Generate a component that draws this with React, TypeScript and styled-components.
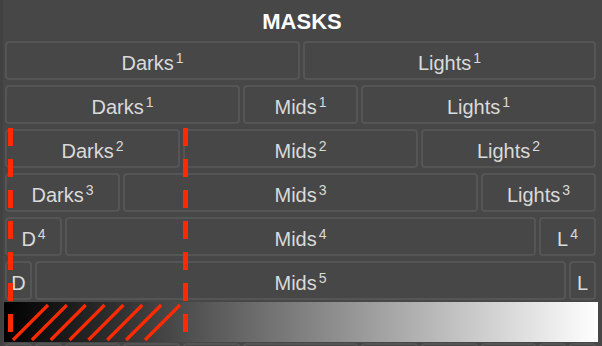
import styled, { createGlobalStyle } from "styled-components";

const GlobalStyle = createGlobalStyle`
  html, body {
    margin: 0;
    padding: 0;
    background: #474747;
  }
  body {
    font-family: "Liberation Sans", Arial, sans-serif;
  }
`;

const RED = "#ff2a00";

const Panel = styled.div`
  position: relative;
  box-sizing: border-box;
  width: 602px;
  height: 346px;
  overflow: hidden;
  background: #474747;
  border-left: 3px solid #414141;
  padding: 0 6px 0 2px;
`;

const Title = styled.div`
  box-sizing: border-box;
  height: 41px;
  padding-top: 11px;
  line-height: 22px;
  font-size: 22px;
  font-weight: 700;
  color: #ffffff;
  text-align: center;
  padding-left: 3px;
`;

const Row = styled.div<{ $side?: number; $top?: number }>`
  display: grid;
  grid-template-columns: ${(p) => (p.$side ? `${p.$side}px 1fr ${p.$side}px` : "295px 1fr")};
  column-gap: 3px;
  margin-top: ${(p) => (p.$top ?? 5)}px;
`;

const FlatRow = styled(Row)`
  grid-template-columns: 27px 27px 55px 57px 57px 1fr 57px 57px 55px 27px 27px;
`;

const Button = styled.div`
  box-sizing: border-box;
  height: 39px;
  border: 2px solid #555555;
  border-radius: 4px;
  padding-top: 5px;
  line-height: 30px;
  font-size: 20px;
  color: #dadada;
  text-align: center;
  white-space: nowrap;
  overflow: hidden;
`;

const Sup = styled.span`
  font-size: 14px;
  line-height: 0;
  vertical-align: 7px;
  margin-left: 2px;
`;

const Gradient = styled.div`
  position: relative;
  height: 40px;
  margin: 2px -2px 0 -1px;
  background: linear-gradient(to right, #000000 0%, #ffffff 100%);
`;

const Hatch = styled.svg`
  position: absolute;
  left: 0;
  top: 0;
`;

const Marker = styled.div<{ $left: number }>`
  position: absolute;
  left: ${(p) => p.$left}px;
  top: 128px;
  width: 5px;
  height: 204px;
  background: repeating-linear-gradient(
    to bottom,
    ${RED} 0px,
    ${RED} 18px,
    transparent 18px,
    transparent 31px
  );
`;

function Label({ text, n }: { text: string; n?: number }) {
  return (
    <Button>
      {text}
      {n !== undefined ? <Sup>{n}</Sup> : null}
    </Button>
  );
}

const rows: { side: number; d: string; l: string; n: number }[] = [
  { side: 235, d: "Darks", l: "Lights", n: 1 },
  { side: 175, d: "Darks", l: "Lights", n: 2 },
  { side: 115, d: "Darks", l: "Lights", n: 3 },
  { side: 57, d: "D", l: "L", n: 4 },
];

export default function App() {
  const lines = Array.from({ length: 8 }, (_, k) => k);

  return (
    <>
      <GlobalStyle />
      <Panel>
        <Title>MASKS</Title>
        <Row $top={0}>
          <Label text="Darks" n={1} />
          <Label text="Lights" n={1} />
        </Row>
        {rows.map((r) => (
          <Row key={r.n} $side={r.side}>
            <Label text={r.d} n={r.n} />
            <Label text="Mids" n={r.n} />
            <Label text={r.l} n={r.n} />
          </Row>
        ))}
        <Row $side={27}>
          <Label text="D" />
          <Label text="Mids" n={5} />
          <Label text="L" />
        </Row>
        <Gradient>
          <Hatch width="200" height="40" viewBox="0 0 200 40">
            {lines.map((k) => (
              <line
                key={k}
                x1={9 + k * 18.86}
                y1={38}
                x2={44 + k * 18.86}
                y2={3}
                stroke={RED}
                strokeWidth={3.2}
              />
            ))}
          </Hatch>
        </Gradient>
        <FlatRow $top={1}>
          {Array.from({ length: 11 }, (_, i) => (
            <Button key={i} />
          ))}
        </FlatRow>
        <Marker $left={5} />
        <Marker $left={180} />
      </Panel>
    </>
  );
}
